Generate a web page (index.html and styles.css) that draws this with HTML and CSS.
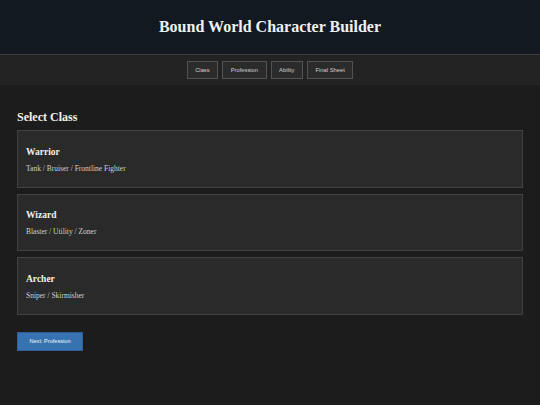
FILE: index.html
```html
<!DOCTYPE html>
<html lang="en">
<head>
<meta charset="utf-8">
<title>Bound World Character Builder</title>
<link rel="stylesheet" href="styles.css">
</head>
<body>
<header class="site-header">
  <h1 class="site-title">Bound World Character Builder</h1>
</header>
<nav class="steps">
  <button class="step-btn">Class</button>
  <button class="step-btn">Profession</button>
  <button class="step-btn">Ability</button>
  <button class="step-btn">Final Sheet</button>
</nav>
<main class="content">
  <h2 class="section-title">Select Class</h2>
  <div class="class-list">
    <div class="class-card">
      <h3 class="class-name">Warrior</h3>
      <p class="class-role">Tank / Bruiser / Frontline Fighter</p>
    </div>
    <div class="class-card">
      <h3 class="class-name">Wizard</h3>
      <p class="class-role">Blaster / Utility / Zoner</p>
    </div>
    <div class="class-card">
      <h3 class="class-name">Archer</h3>
      <p class="class-role">Sniper / Skirmisher</p>
    </div>
  </div>
  <button class="next-btn">Next: Profession</button>
</main>
</body>
</html>
```
FILE: styles.css
```css
html, body {
  margin: 0;
  padding: 0;
}

body {
  background: #1c1c1c;
  color: #e6e6e6;
  font-family: "Liberation Serif", Georgia, serif;
  min-height: 405px;
}

.site-header {
  background: #121920;
  height: 54px;
  border-bottom: 1px solid #3a3c3e;
  display: flex;
  align-items: center;
  justify-content: center;
}

.site-title {
  margin: 0;
  font-size: 16px;
  font-weight: bold;
  color: #eef0f2;
}

.steps {
  background: #232323;
  height: 30px;
  display: flex;
  justify-content: center;
  align-items: center;
  gap: 4px;
}

.step-btn {
  font-family: "Liberation Sans", Arial, sans-serif;
  font-size: 5.8px;
  color: #d0d0d0;
  background: #2b2b2b;
  border: 1px solid #525252;
  height: 18px;
  padding: 0 7.5px;
  margin: 0;
}

.content {
  padding: 17px;
}

.section-title {
  margin: 8px 0 5px;
  font-size: 12px;
  font-weight: bold;
  color: #f0f0f0;
}

.class-list {
  display: flex;
  flex-direction: column;
  gap: 6px;
}

.class-card {
  box-sizing: border-box;
  background: #2a2a2a;
  border: 1px solid #424242;
  height: 57.5px;
  padding: 2px 8px 0;
  display: flex;
  flex-direction: column;
  justify-content: center;
}

.class-name {
  margin: 0 0 7px;
  font-size: 9.5px;
  font-weight: bold;
  color: #f0f0f0;
}

.class-role {
  margin: 0;
  font-size: 7.5px;
  color: #d0d0d0;
}

.next-btn {
  margin-top: 17px;
  font-family: "Liberation Sans", Arial, sans-serif;
  font-size: 5.6px;
  color: #f2f6fa;
  background: #3873b1;
  border: 1px solid #2f5f95;
  width: 66px;
  height: 19px;
  padding: 0;
}
```
